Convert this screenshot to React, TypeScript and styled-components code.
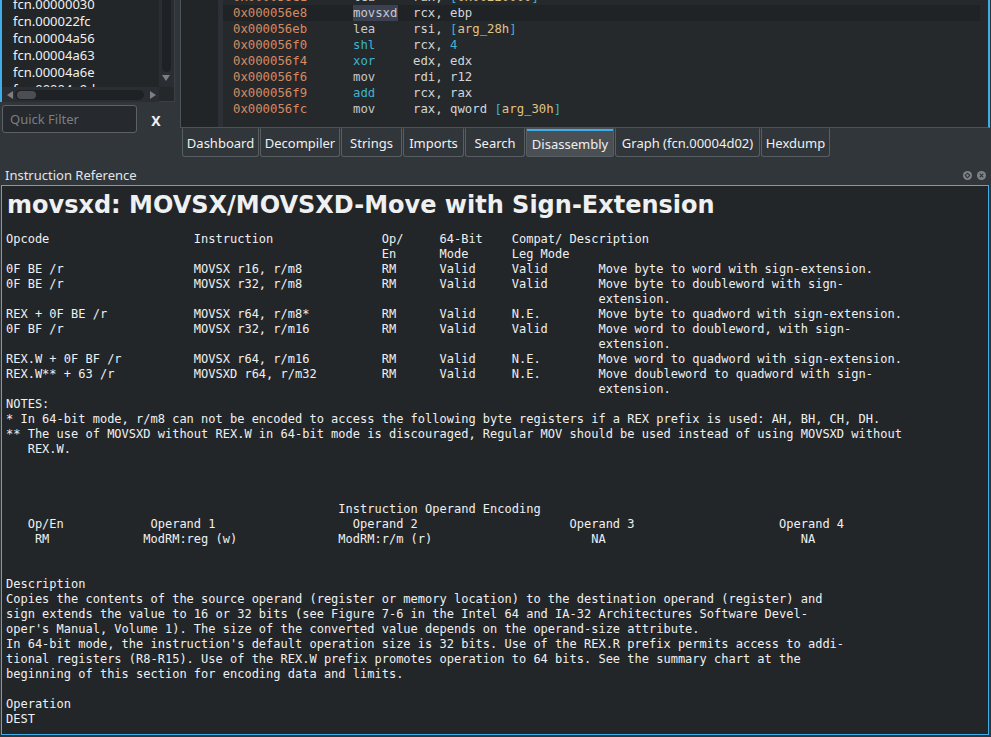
import React from "react";
import styled, { createGlobalStyle, css } from "styled-components";

const GlobalStyle = createGlobalStyle`
  html, body { margin: 0; padding: 0; background: #31363b; }
  body { font-family: "Noto Sans", "DejaVu Sans", sans-serif; overflow: hidden; }
  * { box-sizing: border-box; }
`;

const Window = styled.div`
  width: 991px;
  height: 737px;
  display: flex;
  flex-direction: column;
  background: #31363b;
  color: #eff0f1;
  overflow: hidden;
`;

const TopArea = styled.div`
  display: grid;
  grid-template-columns: 175px 810px;
  column-gap: 5px;
  height: 157px;
  flex: none;
`;

/* ---------- left column: function list ---------- */
const LeftColumn = styled.div`
  display: flex;
  flex-direction: column;
`;

const ListFrame = styled.div`
  display: grid;
  grid-template-columns: 157px 16px;
  grid-template-rows: 87px 15px;
  border-left: 2px solid #3daee9;
  background: #2a2e32;
`;

const ListView = styled.div`
  background: #232629;
  overflow: hidden;
`;

const ListInner = styled.div`
  margin-top: -4px;
`;

const ListItem = styled.div`
  height: 17px;
  line-height: 17px;
  padding-left: 11px;
  font-size: 13px;
  white-space: nowrap;
  color: #eff0f1;
`;

const VScroll = styled.div`
  display: flex;
  flex-direction: column;
  align-items: flex-start;
  padding-left: 3px;
  border-right: 1px solid #3b4045;
  background: #2a2e32;
`;

const VGroove = styled.div`
  width: 9px;
  height: 72px;
  background: #1f2225;
  border-radius: 0 0 5px 5px;
`;

const ArrowIcon = styled.svg<{ $mt?: number }>`
  display: block;
  flex: none;
  margin-top: ${(p) => p.$mt ?? 0}px;
`;

const HScroll = styled.div`
  display: flex;
  align-items: center;
  padding-left: 5px;
  gap: 2px;
  background: #2a2e32;
`;

const HGroove = styled.div`
  width: 129px;
  height: 10px;
  border-radius: 5px;
  background: #1f2225;
  display: flex;
  align-items: center;
  padding-left: 2px;
  margin-right: 4px;
`;

const HHandle = styled.div`
  width: 19px;
  height: 8px;
  border-radius: 4px;
  background: #4b4f53;
`;

const ScrollCorner = styled.div`
  background: #25282b;
  border-right: 1px solid #3b4045;
  border-bottom: 1px solid #3b4045;
`;

const FilterRow = styled.div`
  margin-top: 3px;
  height: 28px;
  display: flex;
  align-items: center;
`;

const FilterInput = styled.input`
  margin-left: 2px;
  width: 135px;
  height: 28px;
  border: 1px solid #5d6266;
  border-radius: 3px;
  background: #26292d;
  color: #eff0f1;
  font-family: "Noto Sans", sans-serif;
  font-size: 13px;
  padding: 0 0 0 7px;
  outline: none;
  &::placeholder { color: #7b7f83; }
`;

const ClearButton = styled.div`
  flex: 1;
  text-align: center;
  font-weight: bold;
  font-size: 14px;
  padding-top: 2px;
  color: #eff0f1;
`;

/* ---------- right column: disassembly ---------- */
const RightColumn = styled.div`
  display: flex;
  flex-direction: column;
`;

const DisasmPanel = styled.div`
  height: 128px;
  flex: none;
  display: grid;
  grid-template-columns: 37px 5px 1fr;
  border-left: 1px solid #4d5257;
  border-bottom: 1px solid #4d5257;
  border-right: 2px solid #3daee9;
  overflow: hidden;
`;

const Gutter = styled.div`
  background: #222528;
`;

const GutterSeparator = styled.div`
  background: #2d3135;
`;

const CodeArea = styled.div`
  background: #25292c;
  padding-right: 8px;
  overflow: hidden;
  font-family: "DejaVu Sans Mono", monospace;
  font-size: 12.3px;
`;

const CodeInner = styled.div`
  margin-top: -11px;
`;

const CodeRow = styled.div<{ $current?: boolean }>`
  display: grid;
  grid-template-columns: 120px 60px 1fr;
  height: 16px;
  padding: 1px 0 0 10px;
  line-height: 15px;
  white-space: pre;
  background: ${(p) => (p.$current ? "#1f2326" : "transparent")};
`;

const Addr = styled.span`
  color: #d88a60;
`;

const Mnemonic = styled.span<{ $kind: "plain" | "math"; $mark?: boolean }>`
  color: ${(p) => (p.$kind === "math" ? "#3db3cc" : "#c8cacb")};
  ${(p) =>
    p.$mark &&
    css`
      justify-self: start;
      background: #3b4152;
      margin-top: -1px;
      padding: 1px 1px 0 0;
      height: 16px;
    `}
`;

const Tok = styled.span<{ $c: "text" | "num" | "brace" | "var" }>`
  color: ${(p) =>
    p.$c === "num" ? "#3db3cc" : p.$c === "brace" ? "#3db3cc" : p.$c === "var" ? "#e0c486" : "#d3d6d8"};
`;

const TabBar = styled.div`
  display: flex;
  gap: 1px;
  height: 29px;
  padding-left: 2px;
`;

const Tab = styled.div<{ $w: number; $active?: boolean }>`
  width: ${(p) => p.$w}px;
  height: 29px;
  display: flex;
  align-items: center;
  justify-content: center;
  font-size: 13px;
  white-space: nowrap;
  color: #eff0f1;
  border: 1px solid #595e62;
  border-top-color: transparent;
  border-radius: 0 0 3px 3px;
  background: ${(p) => (p.$active ? "#4a4f54" : "#31363b")};
  ${(p) =>
    p.$active &&
    css`
      box-shadow: inset 0 2px 0 #3daee9;
      padding-top: 2px;
    `}
`;

/* ---------- dock ---------- */
const DockTitle = styled.div`
  height: 28px;
  flex: none;
  display: flex;
  align-items: center;
  justify-content: space-between;
  padding: 8px 5px 0 5px;
  font-size: 13px;
  line-height: 18px;
  color: #e3e5e6;
`;

const DockButtons = styled.div`
  display: flex;
  gap: 5px;
`;

const DockIcon = styled.svg`
  display: block;
`;

const DocFrame = styled.div`
  flex: 1;
  margin: 0 2px 2px 1px;
  border: 1px solid #3daee9;
  background: #232629;
  padding: 3px 0 0 5px;
  overflow: hidden;
`;

const DocTitle = styled.h1`
  margin: 0;
  font-family: "DejaVu Sans", sans-serif;
  font-size: 24px;
  font-weight: bold;
  line-height: 32px;
  white-space: nowrap;
  color: #eff0f1;
`;

const DocText = styled.pre`
  margin: 11px 0 0 -1px;
  font-family: "DejaVu Sans Mono", monospace;
  font-size: 12px;
  line-height: 15px;
  white-space: pre;
  color: #eff0f1;
`;

/* ---------- data ---------- */
const functions = [
  "fcn.00000030",
  "fcn.000022fc",
  "fcn.00004a56",
  "fcn.00004a63",
  "fcn.00004a6e",
  "fcn.00004a9d",
];

type TokT = [string, "text" | "num" | "brace" | "var"];
type Line = { addr: string; mn: string; kind: "plain" | "math"; ops: TokT[]; current?: boolean };

const code: Line[] = [
  { addr: "0x000056e1", mn: "lea", kind: "plain", ops: [["rax, ", "text"], ["[", "brace"], ["0x00220000", "var"], ["]", "brace"]] },
  { addr: "0x000056e8", mn: "movsxd", kind: "plain", ops: [["rcx, ebp", "text"]], current: true },
  { addr: "0x000056eb", mn: "lea", kind: "plain", ops: [["rsi, ", "text"], ["[", "brace"], ["arg_28h", "var"], ["]", "brace"]] },
  { addr: "0x000056f0", mn: "shl", kind: "math", ops: [["rcx, ", "text"], ["4", "num"]] },
  { addr: "0x000056f4", mn: "xor", kind: "math", ops: [["edx, edx", "text"]] },
  { addr: "0x000056f6", mn: "mov", kind: "plain", ops: [["rdi, r12", "text"]] },
  { addr: "0x000056f9", mn: "add", kind: "math", ops: [["rcx, rax", "text"]] },
  { addr: "0x000056fc", mn: "mov", kind: "plain", ops: [["rax, qword ", "text"], ["[", "brace"], ["arg_30h", "var"], ["]", "brace"]] },
];

const tabs: { label: string; w: number; active?: boolean }[] = [
  { label: "Dashboard", w: 77 },
  { label: "Decompiler", w: 80 },
  { label: "Strings", w: 61 },
  { label: "Imports", w: 61 },
  { label: "Search", w: 60 },
  { label: "Disassembly", w: 88, active: true },
  { label: "Graph (fcn.00004d02)", w: 145 },
  { label: "Hexdump", w: 69 },
];

const cols = (...parts: [number, string][]) => {
  let s = "";
  for (const [c, t] of parts) {
    s = (s.length >= c && s.length > 0 ? s + " " : s.padEnd(c, " ")) + t;
  }
  return s;
};

const docLines = [
  cols([0, "Opcode"], [26, "Instruction"], [52, "Op/"], [60, "64-Bit"], [70, "Compat/ Description"]),
  cols([52, "En"], [60, "Mode"], [70, "Leg Mode"]),
  cols([0, "0F BE /r"], [26, "MOVSX r16, r/m8"], [52, "RM"], [60, "Valid"], [70, "Valid"], [82, "Move byte to word with sign-extension."]),
  cols([0, "0F BE /r"], [26, "MOVSX r32, r/m8"], [52, "RM"], [60, "Valid"], [70, "Valid"], [82, "Move byte to doubleword with sign-"]),
  cols([82, "extension."]),
  cols([0, "REX + 0F BE /r"], [26, "MOVSX r64, r/m8*"], [52, "RM"], [60, "Valid"], [70, "N.E."], [82, "Move byte to quadword with sign-extension."]),
  cols([0, "0F BF /r"], [26, "MOVSX r32, r/m16"], [52, "RM"], [60, "Valid"], [70, "Valid"], [82, "Move word to doubleword, with sign-"]),
  cols([82, "extension."]),
  cols([0, "REX.W + 0F BF /r"], [26, "MOVSX r64, r/m16"], [52, "RM"], [60, "Valid"], [70, "N.E."], [82, "Move word to quadword with sign-extension."]),
  cols([0, "REX.W** + 63 /r"], [26, "MOVSXD r64, r/m32"], [52, "RM"], [60, "Valid"], [70, "N.E."], [82, "Move doubleword to quadword with sign-"]),
  cols([82, "extension."]),
  "NOTES:",
  "* In 64-bit mode, r/m8 can not be encoded to access the following byte registers if a REX prefix is used: AH, BH, CH, DH.",
  "** The use of MOVSXD without REX.W in 64-bit mode is discouraged, Regular MOV should be used instead of using MOVSXD without",
  "   REX.W.",
  "",
  "",
  "",
  cols([46, "Instruction Operand Encoding"]),
  cols([3, "Op/En"], [20, "Operand 1"], [48, "Operand 2"], [78, "Operand 3"], [107, "Operand 4"]),
  cols([4, "RM"], [19, "ModRM:reg (w)"], [46, "ModRM:r/m (r)"], [81, "NA"], [110, "NA"]),
  "",
  "",
  "Description",
  "Copies the contents of the source operand (register or memory location) to the destination operand (register) and",
  "sign extends the value to 16 or 32 bits (see Figure 7-6 in the Intel 64 and IA-32 Architectures Software Devel-",
  "oper's Manual, Volume 1). The size of the converted value depends on the operand-size attribute.",
  "In 64-bit mode, the instruction's default operation size is 32 bits. Use of the REX.R prefix permits access to addi-",
  "tional registers (R8-R15). Use of the REX.W prefix promotes operation to 64 bits. See the summary chart at the",
  "beginning of this section for encoding data and limits.",
  "",
  "Operation",
  "DEST",
];

const ArrowDown = () => (
  <ArrowIcon $mt={3} width="8" height="6" viewBox="0 0 8 6">
    <path d="M0 0 H8 L4 6 Z" fill="#7c8084" />
  </ArrowIcon>
);
const ArrowLeft = () => (
  <ArrowIcon width="6" height="8" viewBox="0 0 6 8">
    <path d="M6 0 V8 L0 4 Z" fill="#7c8084" />
  </ArrowIcon>
);
const ArrowRight = () => (
  <ArrowIcon width="6" height="8" viewBox="0 0 6 8">
    <path d="M0 0 V8 L6 4 Z" fill="#7c8084" />
  </ArrowIcon>
);

const FloatIcon = () => (
  <DockIcon width="9" height="9" viewBox="0 0 9 9">
    <circle cx="4.5" cy="4.5" r="4.5" fill="#7f8387" />
    <path d="M4.5 2.2 L6.8 4.5 L4.5 6.8 L2.2 4.5 Z" fill="none" stroke="#31363b" strokeWidth="1.1" />
  </DockIcon>
);
const CloseIcon = () => (
  <DockIcon width="9" height="9" viewBox="0 0 9 9">
    <circle cx="4.5" cy="4.5" r="4.5" fill="#7f8387" />
    <path d="M2.7 2.7 L6.3 6.3 M6.3 2.7 L2.7 6.3" stroke="#31363b" strokeWidth="1.2" />
  </DockIcon>
);

export default function App() {
  return (
    <>
      <GlobalStyle />
      <Window>
        <TopArea>
          <LeftColumn>
            <ListFrame>
              <ListView>
                <ListInner>
                  {functions.map((f) => (
                    <ListItem key={f}>{f}</ListItem>
                  ))}
                </ListInner>
              </ListView>
              <VScroll>
                <VGroove />
                <ArrowDown />
              </VScroll>
              <HScroll>
                <ArrowLeft />
                <HGroove>
                  <HHandle />
                </HGroove>
                <ArrowRight />
              </HScroll>
              <ScrollCorner />
            </ListFrame>
            <FilterRow>
              <FilterInput placeholder="Quick Filter" readOnly />
              <ClearButton>X</ClearButton>
            </FilterRow>
          </LeftColumn>
          <RightColumn>
            <DisasmPanel>
              <Gutter />
              <GutterSeparator />
              <CodeArea>
                <CodeInner>
                  {code.map((l) => (
                    <CodeRow key={l.addr} $current={l.current}>
                      <Addr>{l.addr}</Addr>
                      <Mnemonic $kind={l.kind} $mark={l.current}>
                        {l.mn}
                      </Mnemonic>
                      <span>
                        {l.ops.map(([t, c], i) => (
                          <Tok key={i} $c={c}>
                            {t}
                          </Tok>
                        ))}
                      </span>
                    </CodeRow>
                  ))}
                </CodeInner>
              </CodeArea>
            </DisasmPanel>
            <TabBar>
              {tabs.map((t) => (
                <Tab key={t.label} $w={t.w} $active={t.active}>
                  {t.label}
                </Tab>
              ))}
            </TabBar>
          </RightColumn>
        </TopArea>
        <DockTitle>
          <span>Instruction Reference</span>
          <DockButtons>
            <FloatIcon />
            <CloseIcon />
          </DockButtons>
        </DockTitle>
        <DocFrame>
          <DocTitle>movsxd: MOVSX/MOVSXD-Move with Sign-Extension</DocTitle>
          <DocText>{docLines.join("\n")}</DocText>
        </DocFrame>
      </Window>
    </>
  );
}
